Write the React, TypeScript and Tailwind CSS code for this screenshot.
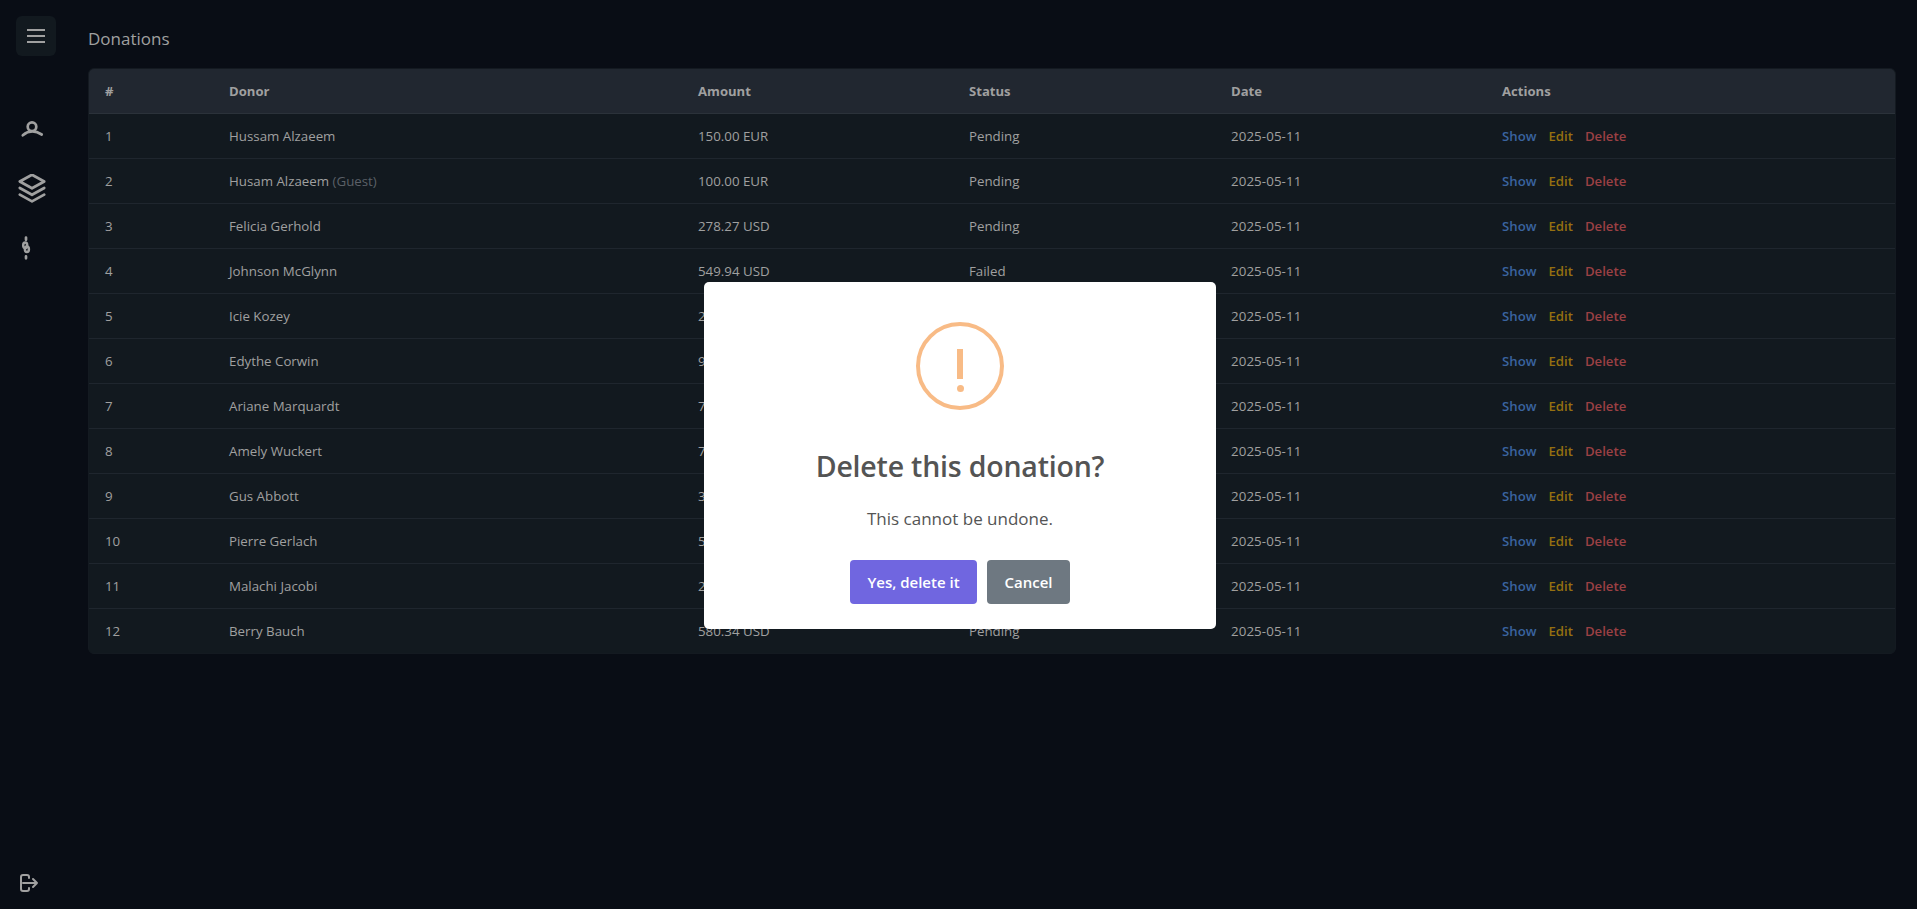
const donations: [string, string, string, boolean?][] = [
  ["Hussam Alzaeem", "150.00 EUR", "Pending"],
  ["Husam Alzaeem", "100.00 EUR", "Pending", true],
  ["Felicia Gerhold", "278.27 USD", "Pending"],
  ["Johnson McGlynn", "549.94 USD", "Failed"],
  ["Icie Kozey", "245.10 USD", "Pending"],
  ["Edythe Corwin", "912.45 USD", "Pending"],
  ["Ariane Marquardt", "731.20 USD", "Pending"],
  ["Amely Wuckert", "764.08 USD", "Pending"],
  ["Gus Abbott", "318.66 USD", "Pending"],
  ["Pierre Gerlach", "527.91 USD", "Pending"],
  ["Malachi Jacobi", "204.37 USD", "Pending"],
  ["Berry Bauch", "580.34 USD", "Pending"],
];

const columns = "grid grid-cols-[124px_469px_271px_262px_271px_1fr] *:pl-4";

function Sidebar() {
  return (
    <aside className="flex w-16 shrink-0 flex-col text-[#a0a0a0]">
      <button className="mt-4 ml-4 flex size-10 items-center justify-center rounded-md bg-[#12191f]">
        <svg width="24" height="24" viewBox="0 0 24 24" fill="none" stroke="currentColor" strokeWidth="2">
          <path d="M3 6h18M3 12h18M3 18h18" />
        </svg>
      </button>
      <nav className="mt-[58px] flex flex-col pl-4">
        <svg width="32" height="32" viewBox="0 0 32 32" fill="none" stroke="currentColor" strokeWidth="2.7" strokeLinecap="round">
          <circle cx="16" cy="12.7" r="4.3" />
          <path d="M6.8 21.3C12.5 16.6 19.5 16.6 25.7 20.5" />
        </svg>
        <svg className="mt-[28px]" width="32" height="32" viewBox="0 0 32 32" fill="none" stroke="currentColor" strokeWidth="2.7" strokeLinecap="round" strokeLinejoin="round">
          <path d="M16 0.7L28.2 7.5L16 14.3L3.8 7.5Z M3.8 14L16 20.8L28.2 14 M3.8 20.6L16 27.4L28.2 20.6" />
        </svg>
        <svg className="mt-[30px]" width="32" height="32" viewBox="0 0 32 32" fill="none" stroke="currentColor" strokeWidth="2.7" strokeLinecap="round">
          <path d="M10 1.6V3.8M10 20.4V22.3" />
          <ellipse cx="9.2" cy="9.2" rx="2" ry="2.8" strokeWidth="2.5" />
          <ellipse cx="10.9" cy="13.2" rx="2" ry="2.8" strokeWidth="2.5" />
        </svg>
      </nav>
      <svg className="mt-auto mb-[14px] ml-[17px]" width="24" height="24" viewBox="0 0 24 24" fill="none" stroke="currentColor" strokeWidth="2" strokeLinecap="round" strokeLinejoin="round">
        <path d="M12 7V6a2 2 0 0 0-2-2H6a2 2 0 0 0-2 2v12a2 2 0 0 0 2 2h4a2 2 0 0 0 2-2v-1M6 12h14M16 8l4 4-4 4" />
      </svg>
    </aside>
  );
}

function ConfirmDialog() {
  return (
    <div className="fixed inset-0 flex items-center justify-center pl-[3px] pt-px">
      <div className="flex h-[347px] w-[512px] flex-col items-center rounded-[5px] bg-white text-[#545454]">
        <div className="mt-10 flex size-[88px] flex-col items-center rounded-full border-4 border-[#f8bb86] pt-[23px]">
          <span className="h-[30px] w-[5.5px] bg-[#f8bb86]" />
          <span className="mt-[6px] size-[7px] rounded-full bg-[#f8bb86]" />
        </div>
        <h2 className="mt-[36px] text-[28.5px] leading-[40px] font-semibold tracking-[-0.2px]">Delete this donation?</h2>
        <p className="mt-[21px] text-[17px] leading-[24px]">This cannot be undone.</p>
        <div className="mt-[29px] flex gap-[10px] text-[15px] leading-5 font-semibold text-white">
          <button className="h-11 w-[127px] rounded-[4px] bg-[#7066e0] pt-px">Yes, delete it</button>
          <button className="h-11 w-[83px] rounded-[4px] bg-[#6e7881] pt-px">Cancel</button>
        </div>
      </div>
    </div>
  );
}

export default function App() {
  return (
    <div className="flex h-screen overflow-hidden bg-[#090d15] font-['Open_Sans','Noto_Sans',sans-serif] text-[#a0a0a0]">
      <Sidebar />
      <main className="flex min-w-0 flex-1 flex-col pt-[25px] pr-[21px] pl-6">
        <h1 className="text-[17px] leading-7">Donations</h1>
        <section className="mt-[15px] overflow-hidden rounded-md border border-[#141a21] bg-[#12191f] text-[13.3px] leading-5">
          <div className={`${columns} h-[45px] border-b border-[#2b323a] bg-[#212730] py-3 text-[13.1px] font-bold`}>
            <span>#</span>
            <span>Donor</span>
            <span>Amount</span>
            <span>Status</span>
            <span>Date</span>
            <span>Actions</span>
          </div>
          {donations.map(([donor, amount, status, guest], i) => (
            <div key={i} className={`${columns} h-[45px] border-b border-[#1f262e] py-3 last:h-11 last:border-b-0`}>
              <span>{i + 1}</span>
              <span>
                {donor} {guest && <span className="text-[#5b6067]">(Guest)</span>}
              </span>
              <span>{amount}</span>
              <span>{status}</span>
              <span className="tracking-[0.1px]">2025-05-11</span>
              <span className="flex gap-3 text-[13.2px] font-semibold">
                <a className="text-[#3a64a0]">Show</a>
                <a className="text-[#957010]">Edit</a>
                <a className="text-[#9b4044]">Delete</a>
              </span>
            </div>
          ))}
        </section>
      </main>
      <ConfirmDialog />
    </div>
  );
}
